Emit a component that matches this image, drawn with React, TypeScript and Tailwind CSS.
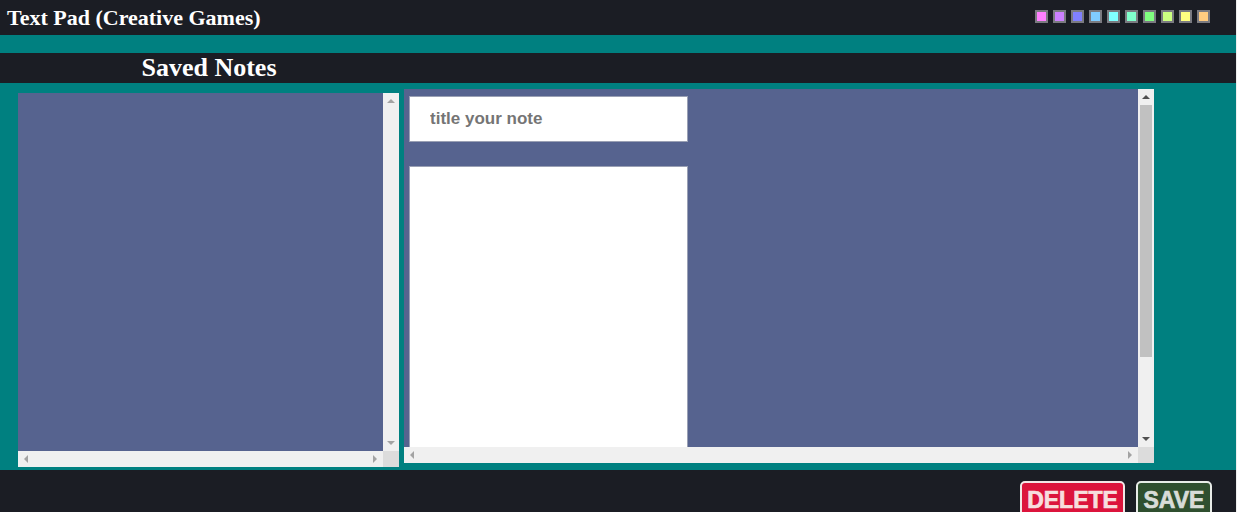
import React from "react";

// swatches in the top bar
const swatches = [
  "bg-[#ff80ff]",
  "bg-[#cc80ff]",
  "bg-[#8080ff]",
  "bg-[#80ccff]",
  "bg-[#80ffff]",
  "bg-[#80ffcc]",
  "bg-[#80ff80]",
  "bg-[#ccff80]",
  "bg-[#ffff80]",
  "bg-[#ffcc80]",
];

const Arrow = ({ dir, dark }: { dir: "up" | "down" | "left" | "right"; dark?: boolean }) => {
  const pts = {
    up: "0,4 4,0 8,4",
    down: "0,0 8,0 4,4",
    left: "4,0 4,8 0,4",
    right: "0,0 0,8 4,4",
  }[dir];
  const vertical = dir === "up" || dir === "down";
  return (
    <svg
      width={vertical ? 8 : 4}
      height={vertical ? 4 : 8}
      viewBox={vertical ? "0 0 8 4" : "0 0 4 8"}
      className="block"
    >
      <polygon points={pts} fill={dark ? "#505050" : "#a3a3a3"} />
    </svg>
  );
};

// fake scroll box with a vertical and horizontal bar
const ScrollBox = ({
  className,
  thumb,
  children,
}: {
  className: string;
  thumb?: boolean;
  children?: React.ReactNode;
}) => (
  <div className={"flex flex-col shrink-0 " + className}>
    <div className="flex flex-1 min-h-0">
      <div className="flex-1 min-w-0 overflow-hidden bg-[#56638f]">{children}</div>
      <div className="w-[16px] bg-[#f0f0f0] flex flex-col items-center">
        <div className="h-[16px] flex items-center justify-center">
          <Arrow dir="up" dark={thumb} />
        </div>
        {thumb ? <div className="w-[12px] h-[252px] bg-[#c1c1c1]" /> : null}
        <div className="flex-1" />
        <div className="h-[16px] flex items-center justify-center">
          <Arrow dir="down" dark={thumb} />
        </div>
      </div>
    </div>
    <div className="flex h-[16px] shrink-0">
      <div className="flex-1 bg-[#f0f0f0] flex items-center justify-between px-[6px]">
        <Arrow dir="left" />
        <Arrow dir="right" />
      </div>
      <div className="w-[16px] bg-[#dcdcdc]" />
    </div>
  </div>
);

export default function App() {
  return (
    <div className="flex w-full h-[512px] overflow-hidden">
      <div className="w-[1236px] shrink-0 flex flex-col">
        {/* top bar */}
        <header className="h-[35px] shrink-0 bg-[#1b1d24] flex items-center justify-between pl-[7px] pr-[26px]">
          <h1 className="text-white font-bold text-[22px] font-['Liberation_Serif',serif] leading-none">
            Text Pad (Creative Games)
          </h1>
          <div className="flex gap-[5px] mt-[-3px]">
            {swatches.map((c) => (
              <div key={c} className={"w-[13px] h-[13px] border-2 border-[#7a7a80] " + c} />
            ))}
          </div>
        </header>
        <div className="h-[18px] shrink-0 bg-[#008080]" />
        <div className="h-[30px] shrink-0 bg-[#1b1d24] flex items-center">
          <h2 className="w-[418px] text-center text-white font-bold text-[26px] font-['Liberation_Serif',serif] leading-none">
            Saved Notes
          </h2>
        </div>

        {/* notes area */}
        <main className="h-[387px] shrink-0 bg-[#008080] flex items-start pl-[18px] gap-[5px]">
          <ScrollBox className="w-[381px] h-[374px] mt-[10px]" />
          <ScrollBox className="w-[750px] h-[374px] mt-[6px]" thumb>
            <div className="pl-[5px] pt-[7px] flex flex-col gap-[24px]">
              <input
                placeholder="title your note"
                className="w-[279px] h-[46px] bg-white border border-[#9aa0b4] px-[20px] text-[17px] font-bold font-['Liberation_Sans',Arial,sans-serif] text-[#333] placeholder:text-[#757575] outline-none"
              />
              <textarea className="w-[279px] h-[300px] bg-white border border-[#9aa0b4] resize-none outline-none" />
            </div>
          </ScrollBox>
        </main>

        {/* footer */}
        <footer className="flex-1 min-h-0 overflow-hidden bg-[#1b1d24] flex justify-end items-start pt-[11px] pr-[24px] gap-[11px]">
          <button className="w-[105px] h-[44px] shrink-0 bg-[#dc143c] border-2 border-[#f2e6e6] rounded-[5px] text-[#f7dede] font-bold text-[23px] leading-none pt-[6px] flex justify-center items-start font-['Liberation_Sans',Arial,sans-serif] [-webkit-text-stroke:0.7px_#f7dede]">
            DELETE
          </button>
          <button className="w-[76px] h-[44px] shrink-0 bg-[#2f4f2f] border-2 border-[#e8ece8] rounded-[5px] text-[#d8dcd8] font-bold text-[23px] leading-none pt-[6px] flex justify-center items-start font-['Liberation_Sans',Arial,sans-serif] [-webkit-text-stroke:0.7px_#d8dcd8]">
            SAVE
          </button>
        </footer>
      </div>
      <div className="flex-1 bg-white border-l border-[#eeeeee]" />
    </div>
  );
}
